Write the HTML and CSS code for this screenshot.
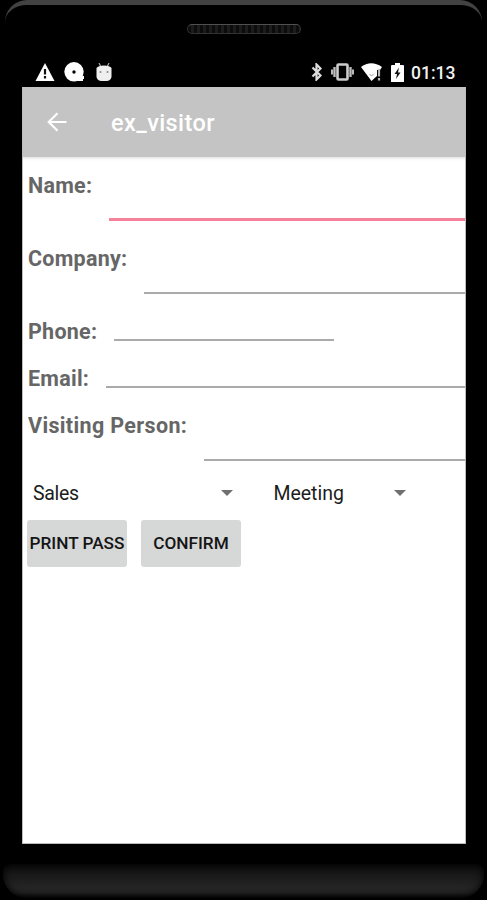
FILE: index.html
```
<!DOCTYPE html>
<html lang="en">
<head>
    <meta charset="UTF-8">
    <title>ex_visitor</title>
    <link rel="stylesheet" href="styles.css">
</head>
<body>

    <div class="phone">
        <div class="top">
            <div class="speaker"></div>
        </div>

        <div class="status">
            <svg class="warning" width="20" height="18" viewBox="0 0 20 18">
                <path d="M10 0L19.500 18H.5z" fill="#fff"/>
                <path d="M10 6v5.500M10 13v2.500" stroke="#111" stroke-width="2.200"/>
            </svg>
            <svg class="disc" width="21" height="20" viewBox="0 0 21 20">
                <circle cx="10" cy="9.800" r="9.700" fill="#fff"/>
                <path d="M14 13l6 1v3h-1v2h-5z" fill="#fff"/>
                <circle cx="10" cy="10" r="1.700" fill="#000"/>
            </svg>
            <svg class="robot" width="16" height="18" viewBox="0 0 16 18">
                <path d="M3 0l2 4M13 0l-2 4" stroke="#aaa" stroke-width="1.200"/>
                <path d="M.5 5Q2 2.500 8 2.500t7.500 2.500v9q-1 4-5 4h-5q-4 0-5-4z" fill="#efefef"/>
                <circle cx="4.500" cy="9" r="1" fill="#888"/>
                <circle cx="11.500" cy="9" r="1" fill="#888"/>
            </svg>

            <svg class="bluetooth" width="12" height="18" viewBox="0 0 12 18">
                <path d="M1.500 4.500l8 8-4 4V1.500l4 4-8 8" fill="none" stroke="#ddd" stroke-width="2.200"/>
            </svg>
            <svg class="vibrate" width="23" height="18" viewBox="0 0 23 18">
                <rect x="6.500" y="1.500" width="10" height="15" rx="1" fill="#000" stroke="#ccc" stroke-width="2.600"/>
                <path d="M3.500 4v10M19.500 4v10" stroke="#bbb" stroke-width="2.400"/>
                <path d="M1 6.500v5M22 6.500v5" stroke="#bbb" stroke-width="2"/>
            </svg>
            <svg class="wifi" width="21" height="18" viewBox="0 0 21 18">
                <path d="M0 4Q10-3.500 21 4l-2 3h-3v6l-5.500 5z" fill="#fff"/>
                <path d="M18 6v7.500M18 15v2.500" stroke="#bbb" stroke-width="2.200"/>
                <path d="M8.500 11l2 2 2-2" fill="none" stroke="#999"/>
            </svg>
            <svg class="battery" width="13" height="19" viewBox="0 0 13 19">
                <path d="M0 3q0-1 1-1h3V0h5v2h3q1 0 1 1v16H0z" fill="#fff"/>
                <path d="M8 4.500L3.500 11H6l-1 5 4.500-6.500H7z" fill="#111"/>
            </svg>
            <span class="time">01:13</span>
        </div>

        <div class="screen">
            <div class="toolbar">
                <svg class="back" width="20" height="20" viewBox="0 0 20 20">
                    <path d="M19.500 10H2M10.500 1.200L1.700 10l8.800 8.800" fill="none" stroke="#fff" stroke-width="2.100"/>
                </svg>
                <h1>ex_visitor</h1>
            </div>

            <form class="form">
                <div class="row tall">
                    <label for="name">Name:</label>
                    <input class="active" id="name" type="text">
                </div>
                <div class="row tall">
                    <label for="company">Company:</label>
                    <input id="company" type="text">
                </div>
                <div class="row">
                    <label for="phone">Phone:</label>
                    <input class="short" id="phone" type="text">
                </div>
                <div class="row">
                    <label for="email">Email:</label>
                    <input id="email" type="text">
                </div>
                <div class="row tall person">
                    <label for="person">Visiting Person:</label>
                    <input id="person" type="text">
                </div>

                <div class="spinners">
                    <div class="spinner department"><span>Sales</span><i></i></div>
                    <div class="spinner reason"><span>Meeting</span><i></i></div>
                </div>

                <div class="buttons">
                    <button type="button">PRINT PASS</button>
                    <button type="button">CONFIRM</button>
                </div>
            </form>
        </div>

        <div class="bottom"></div>
    </div>

</body>
</html>
```
FILE: styles.css
```
* {
    padding: 0;
    margin: 0;
    box-sizing: border-box;
}
body {
    background-color: #000;
    font-family: Roboto, "Liberation Sans", sans-serif;
}
.phone {
    width: 487px;
    height: 900px;
    overflow: hidden;
    background-color: #000;
}
.top {
    height: 57px;
    margin: 0 5px;
    padding-top: 19px;
    border-top: 5px solid #424242;
    border-radius: 22px 22px 0 0;
}
.speaker {
    width: 114px;
    height: 10px;
    margin: 0 auto;
    border: 1px solid #333;
    border-top-color: #505050;
    border-radius: 5px;
    background: repeating-linear-gradient(90deg, #0c0c0c 0, #0c0c0c 3px, #1c1c1c 3px, #1c1c1c 6px);
}

/* status bar */
.status {
    display: flex;
    align-items: center;
    height: 30px;
    padding: 0 31px 0 35px;
}
.disc {
    margin-left: 9px;
}
.robot {
    margin-left: 11px;
}
.bluetooth {
    margin-left: auto;
}
.vibrate {
    margin-left: 8px;
}
.wifi {
    margin-left: 7px;
}
.battery {
    margin-left: 9px;
}
.time {
    width: 45px;
    margin-left: 7px;
    padding-top: 2px;
    color: #f2f2f2;
    font-size: 17.5px;
    font-weight: 500;
    line-height: 28px;
    white-space: nowrap;
}

/* app */
.screen {
    width: 444px;
    height: 757px;
    margin-left: 22px;
    overflow: hidden;
    background-color: #fff;
    border-left: 1px solid #bbb;
    border-right: 1px solid #bbb;
    border-bottom: 1px solid #bbb;
}
.toolbar {
    display: flex;
    align-items: center;
    height: 70px;
    padding-left: 24px;
    background-color: #c4c4c4;
    box-shadow: 0 1px 3px rgba(0, 0, 0, .15);
}
.toolbar h1 {
    margin-left: 44px;
    padding-top: 2px;
    color: #fff;
    font-size: 23.5px;
    font-weight: 500;
    letter-spacing: .4px;
}
.form {
    padding-top: 5px;
}
.row {
    display: flex;
    height: 47px;
    padding-left: 5px;
}
.row label {
    color: #666;
    font-size: 21.5px;
    font-weight: 700;
    line-height: 47px;
    letter-spacing: .25px;
    white-space: nowrap;
}
.row input {
    flex: 1;
    min-width: 0;
    height: 33px;
    margin-left: 17px;
    border: 0;
    border-bottom: 2px solid #aaa;
    outline: none;
    background: none;
    font: 20px Roboto, sans-serif;
}
.tall {
    height: 73px;
}
.tall input {
    height: 59px;
}
.person label {
    letter-spacing: .35px;
}
.row .active {
    border-bottom: 3px solid #f7819b;
}
.row .short {
    flex: none;
    width: 220px;
}
.spinners {
    display: flex;
    height: 45px;
    padding: 0 59px 0 10px;
    line-height: 36px;
    font-size: 19.5px;
    color: #1c1c1c;
}
.spinner {
    display: flex;
    align-items: center;
    justify-content: space-between;
    height: 36px;
}
.spinner span {
    padding-top: 1px;
}
.spinner i {
    border: 6px solid transparent;
    border-top-color: #707070;
    border-bottom: 0;
}
.department {
    width: 201px;
}
.department span {
    letter-spacing: -.3px;
}
.reason {
    width: 133px;
    margin-left: 40px;
}
.buttons {
    display: flex;
    gap: 14px;
    padding-left: 4px;
}
.buttons button {
    width: 100px;
    height: 47px;
    padding-bottom: 1px;
    border: 0;
    border-radius: 3px;
    background-color: #d6d7d7;
    color: #151515;
    font: 500 17.2px Roboto, sans-serif;
    white-space: nowrap;
}

.bottom {
    height: 34px;
    margin: 20px 3px 0;
    border-radius: 8px 8px 24px 24px;
    background: linear-gradient(#0c0c0c, #181818 30%, #252525 70%, #222 85%, #080808);
    box-shadow: inset 0 0 8px #000;
}
```
